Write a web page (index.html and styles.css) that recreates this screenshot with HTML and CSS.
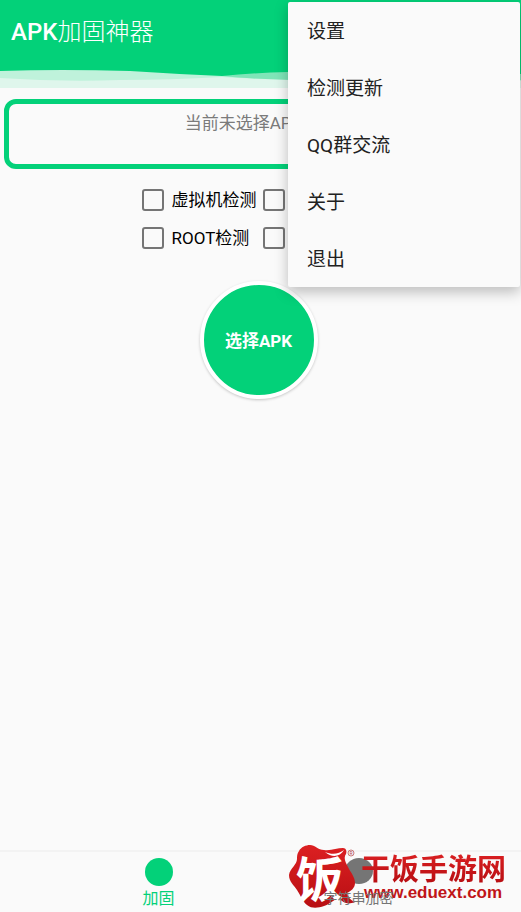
FILE: index.html
```html
<!DOCTYPE html>
<html lang="zh-CN">
<head>
<meta charset="utf-8">
<meta name="viewport" content="width=device-width, initial-scale=1">
<title>APK加固神器</title>
<link rel="stylesheet" href="styles.css">
</head>
<body>
<div class="app">
  <header class="header">
    <h1 class="title">APK<span class="title-light">加固神器</span></h1>
    <svg class="waves" viewBox="0 0 521 18" preserveAspectRatio="none" aria-hidden="true">
      <rect class="wave-base" width="521" height="18"/>
      <path class="wave-mid" d="M0 0H521V11Q400 2 290 9Q250 9 222 7Q170 10 120 10Q60 12 0 8Z"/>
      <path class="wave-soft" d="M222 0H521V10H290Q250 9 222 6Z"/>
      <path class="wave-top" d="M0 0H521V4Q400 -2 288 2Q250 3 222 6Q175 4 130 1Q60 -1 0 1Z"/>
    </svg>
  </header>

  <main class="main">
    <section class="file-box">当前未选择APK文件</section>
    <div class="content">
      <div class="options">
        <label class="option"><input class="check" type="checkbox">虚拟机检测</label>
        <label class="option"><input class="check" type="checkbox" aria-label="选项三"></label>
        <label class="option"><input class="check" type="checkbox">ROOT检测</label>
        <label class="option"><input class="check" type="checkbox" aria-label="选项四"></label>
      </div>
      <button class="pick" type="button">选择APK</button>
    </div>
  </main>

  <nav class="tabs">
    <a class="tab tab-active" href="#harden"><span class="dot"></span><span class="tab-label">加固</span></a>
    <a class="tab" href="#strings"><span class="dot"></span><span class="tab-label">字符串加密</span></a>
  </nav>

  <div class="menu" role="menu">
    <button class="menu-item" type="button" role="menuitem">设置</button>
    <button class="menu-item" type="button" role="menuitem">检测更新</button>
    <button class="menu-item" type="button" role="menuitem">QQ群交流</button>
    <button class="menu-item" type="button" role="menuitem">关于</button>
    <button class="menu-item" type="button" role="menuitem">退出</button>
  </div>

  <div class="brand">
    <svg class="brand-mark" viewBox="0 0 72 70" role="img" aria-label="饭">
      <defs>
        <linearGradient id="red" x1="0" y1="0" x2="0" y2="1">
          <stop offset="0" stop-color="#dc2022"/>
          <stop offset="1" stop-color="#b80f13"/>
        </linearGradient>
      </defs>
      <path fill="url(#red)" d="M10 9C12 5 17 3 21 3C26 3 29 8 35 8C42 9 48 6 54 6C57 6 58 9 57 12C54 16 57 21 59 25C62 31 66 35 66 41C66 46 62 49 58 51C59 55 61 58 66 60C59 63 54 61 50 56C44 58 41 62 35 64C29 66 23 67 18 63C13 59 12 54 8 48C5 43 0 40 0 33C1 26 8 23 8 17C8 14 8 12 10 9Z"/>
      <path fill="#fff" d="M36 10C43 13 50 12 55 8C51 15 43 16 36 10Z"/>
      <text class="brand-glyph" x="31" y="55">饭</text>
      <circle cx="62" cy="11" r="3" fill="none" stroke="#c9797a"/>
      <text class="brand-reg" x="62" y="13">R</text>
    </svg>
    <div class="brand-words">
      <span class="brand-name">干饭手游网</span>
      <span class="brand-url">www.eduext.com</span>
    </div>
  </div>
</div>
</body>
</html>
```

FILE: styles.css
```css
:root {
  --green: #03d179;
  --paper: #fafafa;
}

* { box-sizing: border-box; }

body {
  margin: 0;
  background: var(--paper);
  color: #000;
  font-family: Roboto, "Noto Sans CJK SC", sans-serif;
  font-size: 16px;
}

button {
  border: 0;
  font: inherit;
  cursor: pointer;
}

.app {
  position: relative;
  display: flex;
  flex-direction: column;
  min-height: 100vh;
  overflow: hidden;
}

.header {
  background: var(--green);
}

.title {
  margin: 0;
  padding: 16px 11px 22px;
  color: #fff;
  font-size: 24px;
  font-weight: 500;
  line-height: 32px;
}

.title-light { font-weight: 300; }

.waves {
  display: block;
  width: 100%;
  height: 18px;
}

.wave-base { fill: #dff6ec; }
.wave-mid { fill: #bff2db; }
.wave-soft { fill: #7fe5b8; }
.wave-top { fill: var(--green); }

.main {
  flex: 1;
  padding: 11px 4px;
}

.file-box {
  height: 70px;
  padding: 8px;
  border: 5px solid var(--green);
  border-radius: 12px;
  color: #7b7b7b;
  font-size: 17px;
  line-height: 22px;
  text-align: center;
}

.content {
  display: flex;
  flex-direction: column;
  align-items: center;
  padding: 12px 4px 0 0;
}

.options {
  display: grid;
  grid-template-columns: 121px 113px;
}

.option {
  display: flex;
  align-items: center;
  gap: 8px;
  height: 38px;
  font-size: 17px;
  line-height: 20px;
  white-space: nowrap;
}

.check {
  appearance: none;
  width: 22px;
  height: 22px;
  margin: 0;
  border: 2px solid #757575;
  border-radius: 3px;
}

.check:checked { background: var(--green); }

.pick {
  width: 118px;
  height: 118px;
  margin-top: 24px;
  padding: 0 0 2px;
  border: 4px solid #fff;
  border-radius: 50%;
  background: var(--green);
  box-shadow: 0 1px 3px rgba(0, 0, 0, .22);
  color: #fff;
  font-size: 17px;
  font-weight: 700;
}

.tabs {
  display: flex;
  justify-content: center;
  height: 62px;
  padding: 6px 4px 0 0;
  border-top: 2px solid #f3f3f3;
}

.tab {
  display: flex;
  flex-direction: column;
  align-items: center;
  width: 200px;
  color: #757575;
  font-size: 14px;
  line-height: 28px;
  text-decoration: none;
}

.tab-active {
  color: var(--green);
  font-size: 16px;
  line-height: 26px;
}

.tab-label {
  position: relative;
  z-index: 1;
}

.dot {
  width: 28px;
  height: 28px;
  border-radius: 50%;
  background: currentColor;
}

.menu {
  position: absolute;
  top: 2px;
  right: 1px;
  width: 232px;
  border-radius: 2px;
  background: var(--paper);
  box-shadow: 0 5px 14px rgba(0, 0, 0, .25);
}

.menu-item {
  display: block;
  width: 100%;
  height: 57px;
  padding: 0 19px 2px;
  background: none;
  color: #212121;
  font-size: 19px;
  text-align: left;
}

.brand {
  position: absolute;
  right: 16px;
  bottom: 0;
  display: flex;
  align-items: center;
  color: #c01518;
  pointer-events: none;
}

.brand-mark {
  width: 72px;
  height: 70px;
  overflow: visible;
}

.brand-glyph {
  fill: #fff;
  font-family: "Noto Sans CJK SC", sans-serif;
  font-size: 48px;
  font-weight: 700;
  text-anchor: middle;
}

.brand-reg {
  fill: #b3484a;
  font-size: 5px;
  text-anchor: middle;
}

.brand-words {
  display: flex;
  flex-direction: column;
  width: 144px;
  font-weight: 700;
}

.brand-name {
  background: linear-gradient(#dc2022, #b80f13);
  background-clip: text;
  color: transparent;
  font-family: "Noto Sans CJK SC", sans-serif;
  font-size: 29px;
  line-height: 32px;
  white-space: nowrap;
}

.brand-url {
  font-family: "Liberation Sans", sans-serif;
  font-size: 17px;
  line-height: 20px;
  text-align: center;
}
```
